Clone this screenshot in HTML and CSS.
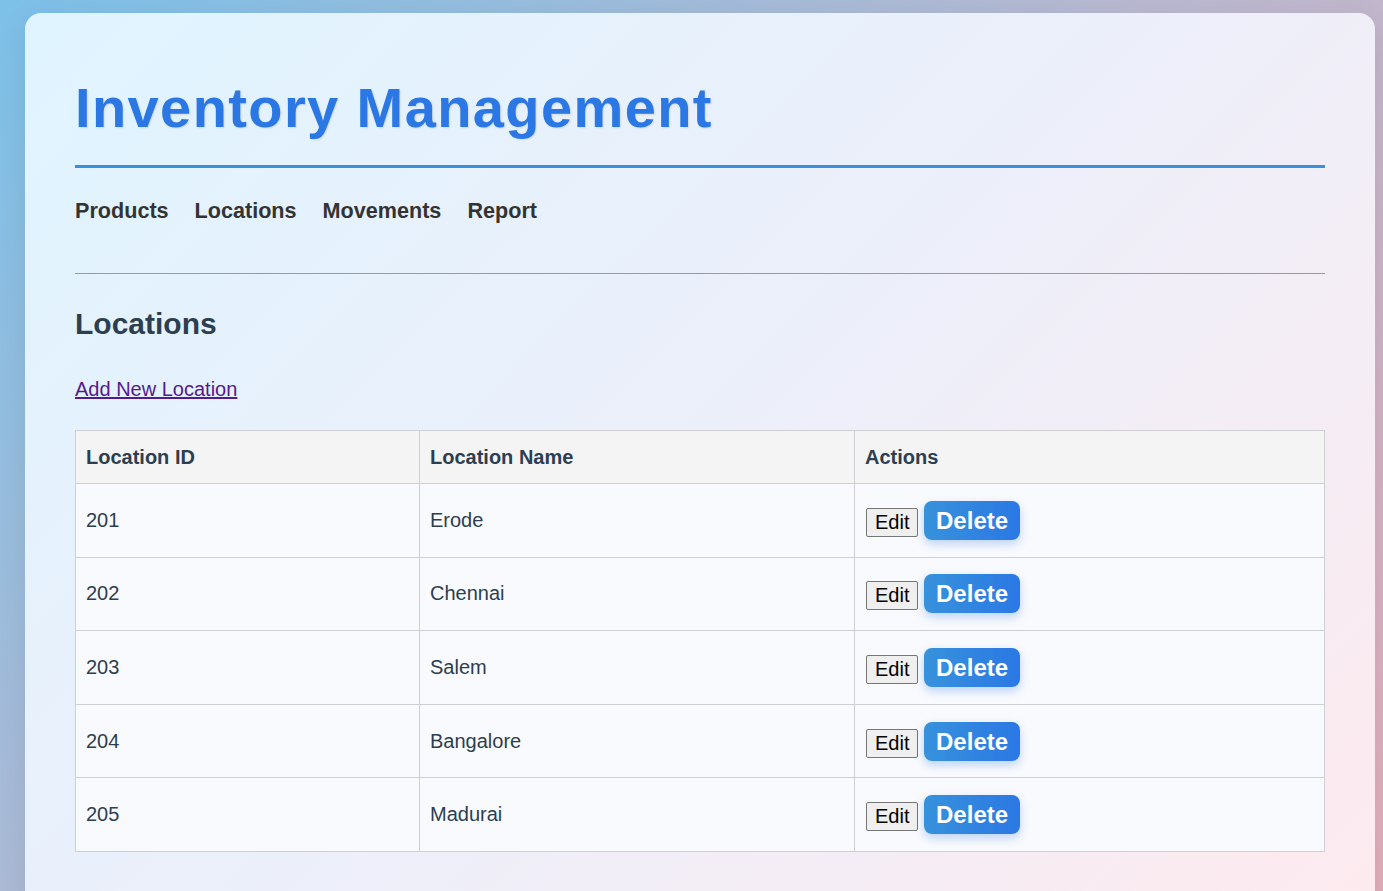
FILE: index.html
```html
<!DOCTYPE html>
<html lang="en">
<head>
<meta charset="utf-8">
<title>Inventory Management</title>
<link rel="stylesheet" href="styles.css">
</head>
<body>
<div class="card">
  <h1 class="title">Inventory Management</h1>
  <nav class="nav">
    <a href="#">Products</a>
    <a href="#">Locations</a>
    <a href="#">Movements</a>
    <a href="#">Report</a>
  </nav>
  <hr class="divider">
  <h2 class="section-title">Locations</h2>
  <a class="add-link" href="#">Add New Location</a>
  <table class="data-table">
    <thead>
      <tr>
        <th class="col-id">Location ID</th>
        <th class="col-name">Location Name</th>
        <th class="col-actions">Actions</th>
      </tr>
    </thead>
    <tbody>
      <tr><td>201</td><td>Erode</td><td><button class="btn-edit">Edit</button> <button class="btn-delete">Delete</button></td></tr>
      <tr><td>202</td><td>Chennai</td><td><button class="btn-edit">Edit</button> <button class="btn-delete">Delete</button></td></tr>
      <tr><td>203</td><td>Salem</td><td><button class="btn-edit">Edit</button> <button class="btn-delete">Delete</button></td></tr>
      <tr><td>204</td><td>Bangalore</td><td><button class="btn-edit">Edit</button> <button class="btn-delete">Delete</button></td></tr>
      <tr><td>205</td><td>Madurai</td><td><button class="btn-edit">Edit</button> <button class="btn-delete">Delete</button></td></tr>
    </tbody>
  </table>
</div>
</body>
</html>
```
FILE: styles.css
```css
html, body {
  margin: 0;
  min-height: 100%;
}
body {
  font-family: "Liberation Sans", Arial, sans-serif;
  background: linear-gradient(135deg, #7cc0e8 0%, #b8b8d0 50%, #e2aebb 100%);
  background-attachment: fixed;
  padding: 13px 8px 40px 25px;
  min-height: 891px;
  box-sizing: border-box;
}
.card {
  background: linear-gradient(135deg, #dff4ff 0%, #eceffa 50%, #fdeaee 100%);
  border-radius: 16px;
  padding: 50px 50px 60px;
  box-shadow: 0 8px 30px rgba(0, 0, 0, 0.08);
}
.title {
  margin: 12px 0 0;
  padding-bottom: 25px;
  border-bottom: 3px solid #3a90d8;
  font-size: 56px;
  font-weight: bold;
  letter-spacing: 1.4px;
  color: #2b78e4;
  text-shadow: 1px 1px 2px rgba(0, 0, 0, 0.1);
}
.nav {
  margin-top: 30px;
  display: flex;
  gap: 26px;
}
.nav a {
  font-size: 21.6px;
  font-weight: bold;
  color: #333;
  text-decoration: none;
}
.divider {
  margin: 49px 0 0;
  border: 0;
  border-top: 1px solid #9a9a9a;
  height: 0;
}
.section-title {
  margin: 33px 0 0;
  font-size: 30px;
  font-weight: bold;
  color: #2c3e50;
}
.add-link {
  display: inline-block;
  margin-top: 37px;
  font-size: 20px;
  color: #551a8b;
  text-decoration: underline;
}
.data-table {
  margin-top: 29px;
  width: 100%;
  border-collapse: collapse;
  font-size: 20px;
  color: #2c3e50;
}
.data-table th,
.data-table td {
  border: 1px solid #cfcfd3;
  padding: 15px 10px;
  text-align: left;
}
.data-table th {
  background: #f4f4f5;
  font-weight: bold;
  padding: 15px 10px 14px;
}
.data-table td {
  background: #f9fafd;
  height: 42.6px;
}
.col-id { width: 323px; }
.col-name { width: 414px; }
.btn-edit {
  font-family: "Liberation Sans", Arial, sans-serif;
  font-size: 20px;
  color: #000;
  background: #efefef;
  border: 1px solid #767676;
  border-radius: 2px;
  padding: 2px 8px;
  margin-left: 1px;
}
.btn-delete {
  font-family: "Liberation Sans", Arial, sans-serif;
  font-size: 24px;
  font-weight: bold;
  color: #fff;
  background: linear-gradient(90deg, #3792dc, #2b78e4);
  border: 0;
  border-radius: 8px;
  padding: 5px 12px;
  line-height: 29px;
  box-shadow: 0 4px 10px rgba(43, 120, 228, 0.3);
}
```
